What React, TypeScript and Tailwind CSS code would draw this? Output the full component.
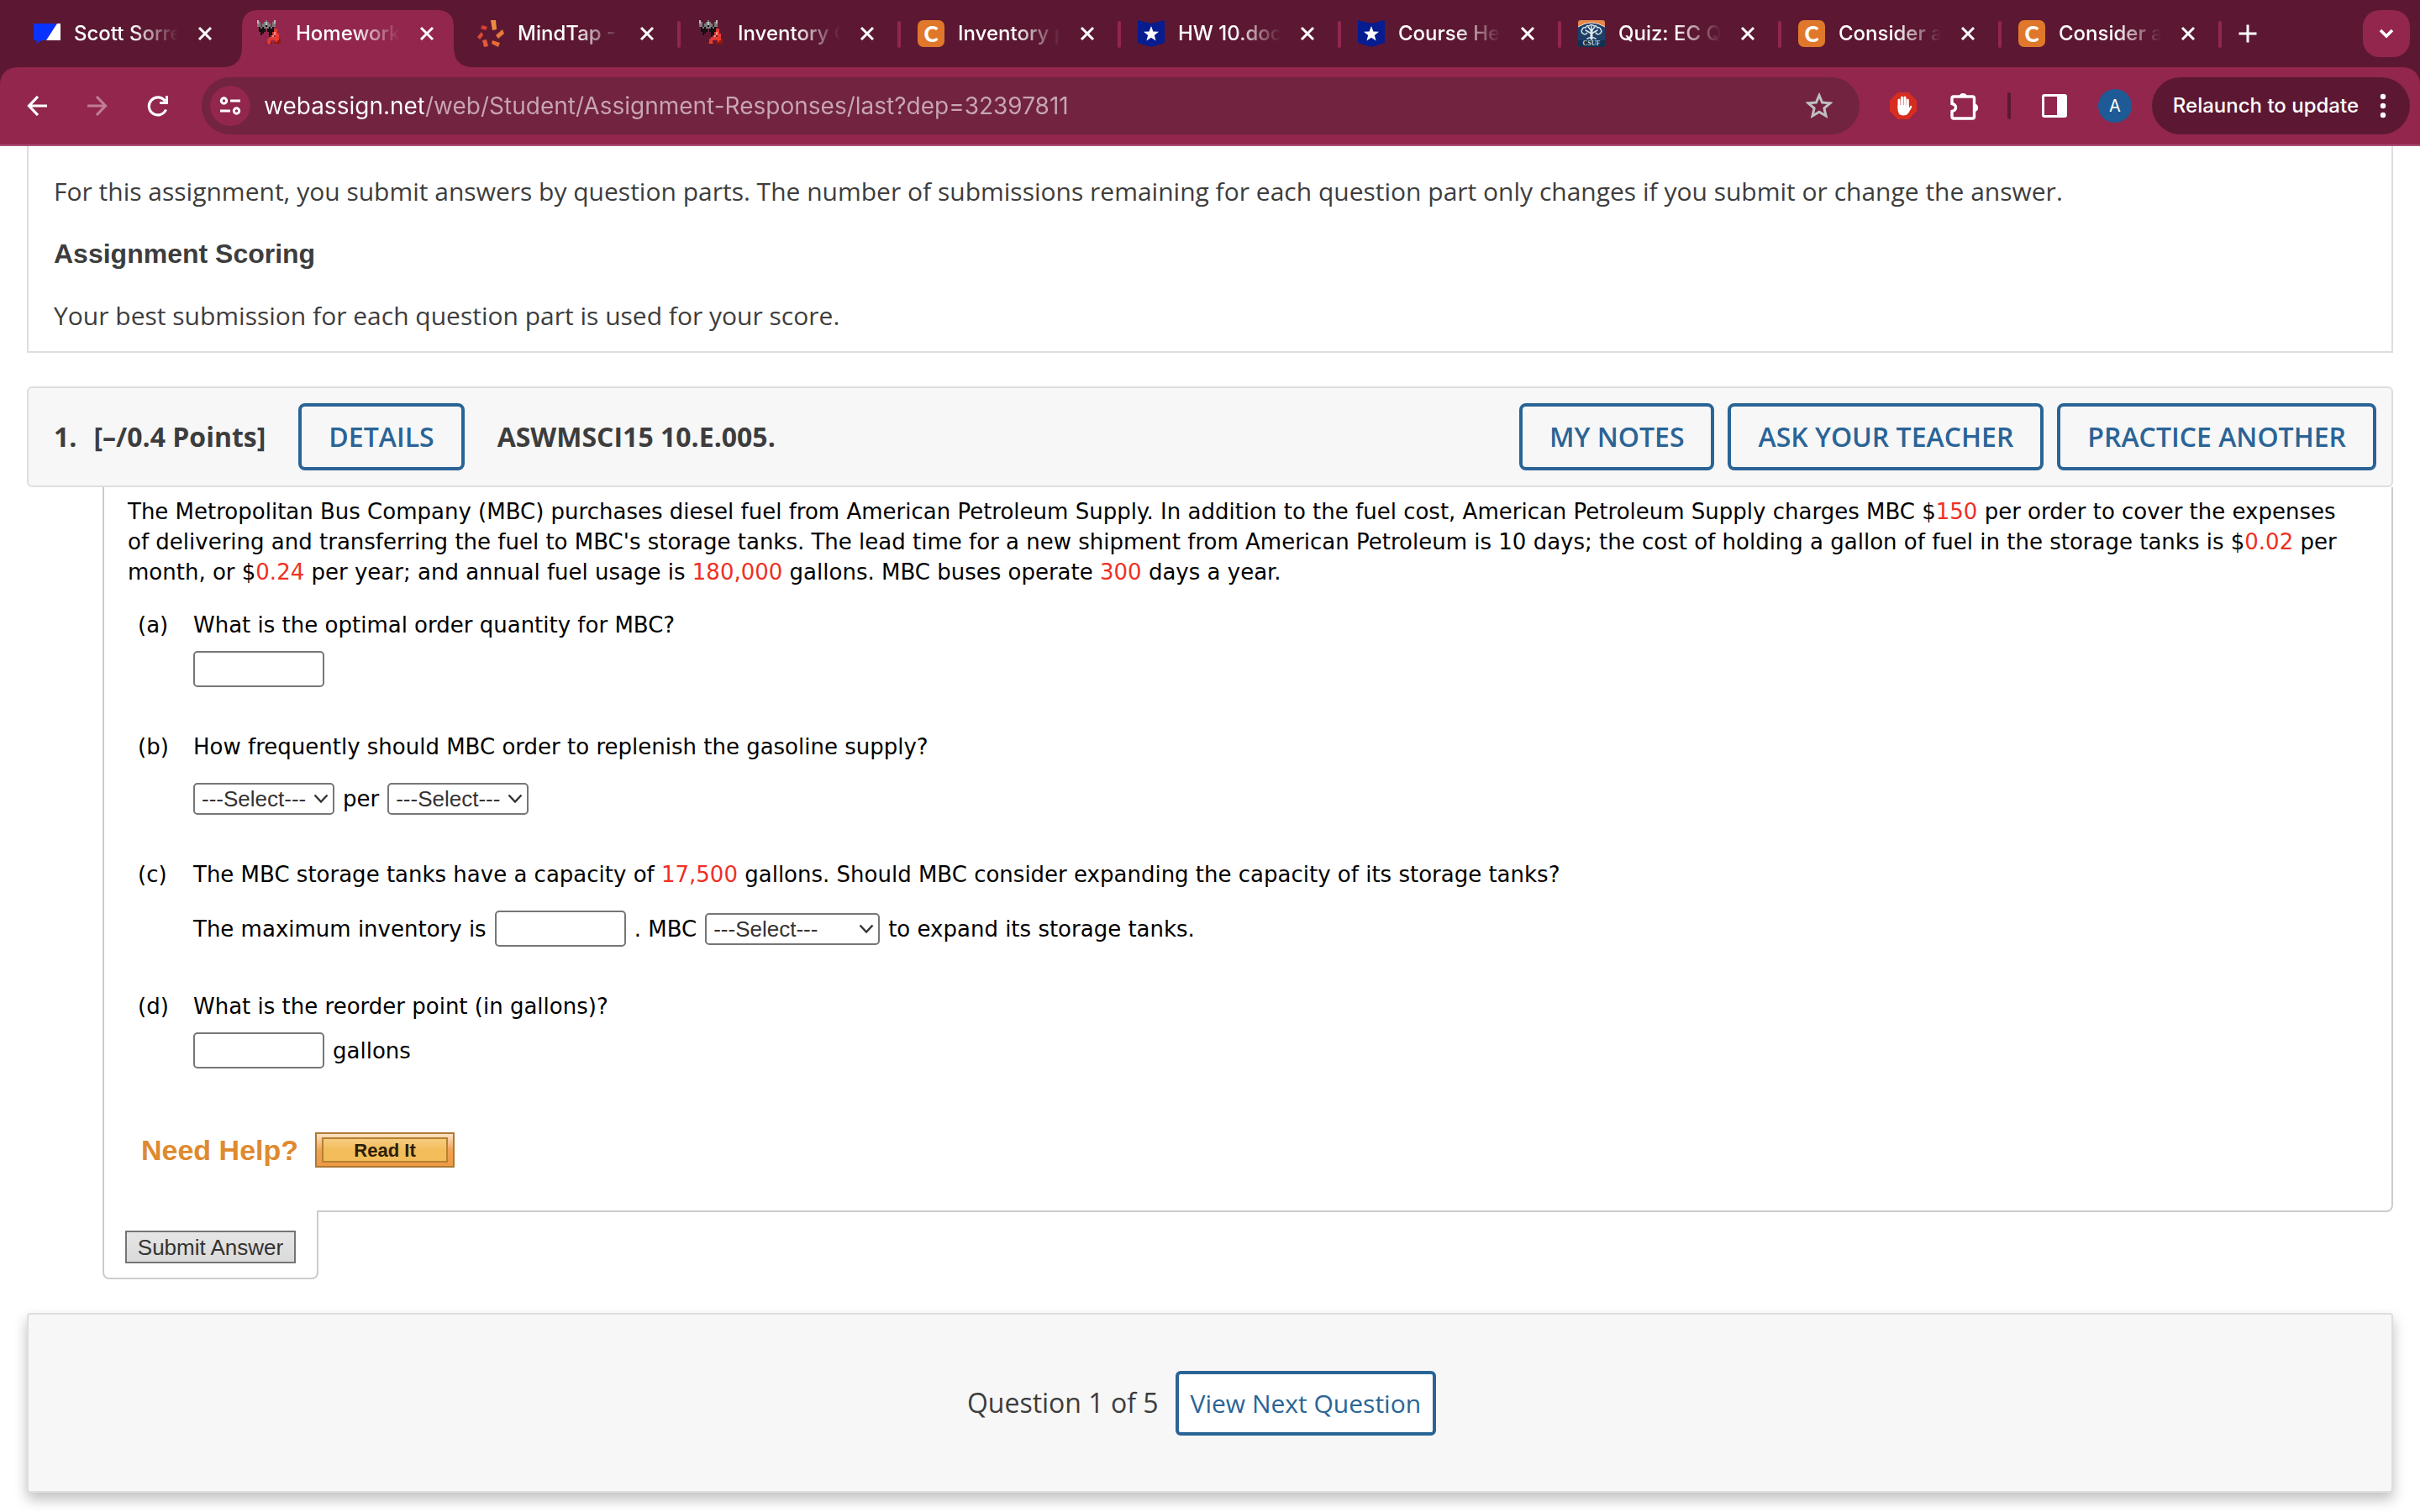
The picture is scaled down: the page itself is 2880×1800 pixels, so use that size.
import React from "react";

/* ---------- Favicons ---------- */

function ScottIcon() {
  return (
    <svg viewBox="0 0 32 32" className="h-8 w-8 shrink-0" aria-hidden="true">
      <path d="M0 4H28L15 24H10L3 28L4 24H0Z" fill="#0a32ff" />
      <path d="M28 4H32V24H15Z" fill="#fff" />
    </svg>
  );
}

const pixelColors: Record<string, string> = {
  l: "#bdbdbd",
  g: "#7c7c7c",
  k: "#151012",
  r: "#ee3a30",
  R: "#d23a38",
  p: "#f58a84",
  d: "#8f1a10",
};

const webAssignPixels = [
  ".l....g....l....",
  ".lg..glg..gl....",
  ".gg.gglgg.gg....",
  ".gg.ggkgg.gg....",
  "..kgkgggkgk.....",
  "..kkkk.kkkkRR...",
  "..kkkk.kkkkRr...",
  "...kk...kkRpr...",
  "...k....kkRprr..",
  "........kRp.rr..",
  "........RrrrrR..",
  ".......RrRRRrrd.",
  ".......Rr...rdd.",
  "......drrd.dddd.",
];

function WebAssignIcon() {
  return (
    <svg
      viewBox="0 0 32 32"
      className="h-8 w-8 shrink-0"
      shapeRendering="crispEdges"
      aria-hidden="true"
    >
      {webAssignPixels.flatMap((row, y) =>
        row
          .split("")
          .map((c, x) =>
            c === "." ? null : (
              <rect
                key={x + "-" + y}
                x={x * 2}
                y={y * 2}
                width="2"
                height="2"
                fill={pixelColors[c]}
              />
            ),
          ),
      )}
    </svg>
  );
}

function MindTapIcon() {
  return (
    <svg viewBox="0 0 32 32" className="h-8 w-8 shrink-0" aria-hidden="true">
      <path d="M16 0H22L23 11L18 12Z" fill="#ee8b41" />
      <path d="M30 11L32 16L25 22L22 18Z" fill="#e8793a" />
      <path d="M18 24L27 27L25 32L17 28Z" fill="#e66c36" />
      <path d="M6 24L11 23L13 31L8 32Z" fill="#e35b36" />
      <path d="M5 14L7 18L3 23L0 20Z" fill="#dd4b33" />
      <path d="M6 6L12 8L10 12L4 10Z" fill="#d83f33" />
    </svg>
  );
}

function CheggIcon() {
  return (
    <span
      aria-hidden="true"
      className="flex h-8 w-8 shrink-0 items-center justify-center rounded-[7px] bg-[#e0782c] font-['Lato'] text-[26px] leading-8 font-black text-white"
    >
      C
    </span>
  );
}

function CourseHeroIcon() {
  return (
    <svg viewBox="0 0 32 32" className="h-8 w-8 shrink-0" aria-hidden="true">
      <path d="M0 0L16 4L32 0V27L16 32L0 27Z" fill="#061c8f" />
      <path
        d="M16 7L18.400 13.600L25 13.800L19.800 18L21.600 24.600L16 20.800L10.400 24.600L12.200 18L7 13.800L13.600 13.600Z"
        fill="#fff"
      />
    </svg>
  );
}

function CsufIcon() {
  return (
    <svg viewBox="0 0 32 32" className="h-8 w-8 shrink-0" aria-hidden="true">
      <rect x="0" y="0" width="32" height="32" rx="3" fill="#1d3f66" />
      <path d="M0 8V3Q0 0 3 0H29Q32 0 32 3V8Q24 3 16 3Q8 3 0 8Z" fill="#e8874a" />
      <path d="M0 8Q8 3 16 3Q24 3 32 8" fill="none" stroke="#f3e3d4" strokeWidth="1" />
      <g fill="none" stroke="#dfe7ee" strokeLinecap="round">
        <path d="M16 22V12" strokeWidth="3" />
        <path d="M16 16L9 12M16 16L23 12M16 13L12 8M16 13L20 8M16 12V7" strokeWidth="1.500" />
        <path
          d="M5 11Q6 8 9 9Q10 6 13 7Q16 4 19 7Q22 6 23 9Q26 8 27 11Q29 14 26 16Q23 18 21 15M5 11Q3 14 6 16Q9 18 11 15"
          strokeWidth="1.500"
          strokeDasharray="3 1"
        />
        <path d="M11 22Q16 19 21 22" strokeWidth="1.500" />
      </g>
      <path d="M0 24H32V29Q32 32 29 32H3Q0 32 0 29Z" fill="#12304f" />
      <text
        x="16"
        y="30"
        textAnchor="middle"
        fontFamily="Liberation Serif, serif"
        fontWeight="700"
        fontSize="8"
        fill="#c5d3df"
      >
        CSUF
      </text>
    </svg>
  );
}

/* ---------- Tab strip ---------- */

type Tab = { title: string; icon: React.ReactNode; active?: boolean; divider?: boolean };

const tabs: Tab[] = [
  { title: "Scott Sorre", icon: <ScottIcon /> },
  { title: "Homework", icon: <WebAssignIcon />, active: true },
  { title: "MindTap - C", icon: <MindTapIcon />, divider: true },
  { title: "Inventory C", icon: <WebAssignIcon />, divider: true },
  { title: "Inventory p", icon: <CheggIcon />, divider: true },
  { title: "HW 10.doc", icon: <CourseHeroIcon />, divider: true },
  { title: "Course Her", icon: <CourseHeroIcon />, divider: true },
  { title: "Quiz: EC Q", icon: <CsufIcon />, divider: true },
  { title: "Consider a", icon: <CheggIcon />, divider: true },
  { title: "Consider a", icon: <CheggIcon />, divider: true },
];

function TabItem({ tab, wide }: { tab: Tab; wide: boolean }) {
  return (
    <div
      className={
        "relative flex h-20 items-center px-[22px] " + (wide ? "w-[264px]" : "w-[262px]")
      }
    >
      {tab.active && (
        <svg
          viewBox="0 0 300 68"
          className="absolute top-3 -left-[18px] h-[68px] w-[300px]"
          aria-hidden="true"
        >
          <path
            d="M0 68Q24 68 24 44V20Q24 0 44 0H256Q276 0 276 20V44Q276 68 300 68Z"
            fill="#92264d"
          />
        </svg>
      )}
      <a href="#" className="relative flex min-w-0 flex-1 items-center gap-4">
        {tab.icon}
        <span className="flex-1 overflow-hidden mask-r-from-55% mask-r-to-100% text-2xl font-medium whitespace-nowrap text-white">
          {tab.title}
        </span>
      </a>
      <button
        type="button"
        aria-label={"Close " + tab.title}
        className="relative ml-4 flex h-8 w-8 shrink-0 items-center justify-center"
      >
        <svg viewBox="0 0 18 18" className="h-[18px] w-[18px]" aria-hidden="true">
          <path d="M2 2L16 16M16 2L2 16" stroke="#fff" strokeWidth="3" fill="none" />
        </svg>
      </button>
      {tab.divider && (
        <span className="absolute top-[25px] -right-0.5 h-8 w-1 rounded-full bg-[#92264d]" />
      )}
    </div>
  );
}

function TabStrip() {
  return (
    <div className="flex h-20 items-center bg-[#5c1832] pr-3 pl-[18px]">
      {tabs.map((tab, i) => (
        <TabItem key={i} tab={tab} wide={i < 2} />
      ))}
      <button type="button" aria-label="New tab" className="ml-[22px] h-8">
        <svg viewBox="0 0 22 32" className="h-8 w-[22px]" aria-hidden="true">
          <path d="M11 5.500V26.500M0.500 16H21.500" stroke="#fff" strokeWidth="3" fill="none" />
        </svg>
      </button>
      <button
        type="button"
        aria-label="Search tabs"
        className="ml-auto flex h-14 w-14 items-center justify-center rounded-[20px] bg-[#92264d]"
      >
        <svg viewBox="0 0 18 12" className="h-3 w-[18px]" aria-hidden="true">
          <path d="M2 2L9 9L16 2" stroke="#fff" strokeWidth="3.500" fill="none" />
        </svg>
      </button>
    </div>
  );
}

/* ---------- Toolbar ---------- */

function Toolbar() {
  return (
    <div className="bg-[#5c1832]">
      <div className="flex h-[94px] items-center rounded-t-[20px] border-b-2 border-[#ab4f78] bg-[#92264d] pr-3 pl-[26px]">
        <div className="flex gap-9">
          <button type="button" aria-label="Back" className="flex h-9 w-9 items-center justify-center">
            <svg viewBox="0 0 24 24" className="h-6 w-6" aria-hidden="true">
              <path d="M13 1L2.500 12L13 23M3 12H24" stroke="#fff" strokeWidth="3.200" fill="none" />
            </svg>
          </button>
          <button type="button" aria-label="Forward" className="flex h-9 w-9 items-center justify-center">
            <svg viewBox="0 0 24 24" className="h-6 w-6" aria-hidden="true">
              <path d="M11 1L21.500 12L11 23M21 12H0" stroke="#c07c98" strokeWidth="3.200" fill="none" />
            </svg>
          </button>
          <button type="button" aria-label="Reload" className="flex h-9 w-9 items-center justify-center">
            <svg viewBox="0 0 26 26" className="h-[26px] w-[26px]" aria-hidden="true">
              <path d="M22.500 17.500A10.500 10.500 0 1 1 21.500 7.500" stroke="#fff" strokeWidth="3.200" fill="none" />
              <path d="M25 1V11H15V8H22V1Z" fill="#fff" />
            </svg>
          </button>
        </div>

        <div className="ml-[34px] flex h-[68px] flex-1 items-center rounded-full bg-[#712340] pr-8 pl-2.5">
          <button
            type="button"
            aria-label="View site information"
            className="flex h-12 w-12 shrink-0 items-center justify-center rounded-full bg-[#92264d]"
          >
            <svg viewBox="0 0 26 24" className="h-6 w-[26px]" aria-hidden="true">
              <g stroke="#fff" strokeWidth="3" fill="none">
                <circle cx="5.500" cy="6" r="3.200" />
                <path d="M13 6H25M1 18H13" />
                <circle cx="20.500" cy="18" r="3.200" />
              </g>
            </svg>
          </button>
          <input
            type="text"
            aria-label="Address"
            defaultValue="webassign.net/web/Student/Assignment-Responses/last?dep=32397811"
            className="ml-4 h-11 min-w-0 flex-1 bg-[linear-gradient(to_right,#ffffff_190px,#c8a5b4_190px)] bg-clip-text text-[28px] text-transparent outline-none"
          />
          <button type="button" aria-label="Bookmark this tab" className="flex h-8 w-8 shrink-0 items-center justify-center">
            <svg viewBox="0 0 32 32" className="h-8 w-8" aria-hidden="true">
              <path
                d="M16 3.500L19.600 12L29 12.800L21.900 18.900L24 28L16 23.200L8 28L10.100 18.900L3 12.800L12.400 12Z"
                stroke="#c0bfc0"
                strokeWidth="3"
                fill="none"
              />
            </svg>
          </button>
        </div>

        <button type="button" aria-label="Ad blocker" className="ml-9 h-8 w-8">
          <svg viewBox="0 0 32 32" className="h-8 w-8" aria-hidden="true">
            <path d="M9.500 0H22.500L32 9.500V22.500L22.500 32H9.500L0 22.500V9.500Z" fill="#d62d20" />
            <g stroke="#fff" strokeWidth="3" strokeLinecap="round" fill="none">
              <path d="M11 18V9M14.500 17V6M18 17V6M21.300 18V9" />
            </g>
            <path d="M9.500 15H22.800V19L24.500 16Q27 15 26 18L22 25Q20 27.500 16 27.500Q9.500 27.500 9.500 20Z" fill="#fff" />
          </svg>
        </button>
        <button type="button" aria-label="Extensions" className="ml-[38px] h-9 w-9">
          <svg viewBox="0 0 36 36" className="h-9 w-9" aria-hidden="true">
            <path
              d="M6 7H28.500Q30.500 7 30.500 9V31Q30.500 33 28.500 33H6Q4 33 4 31V24.500Q8.500 23.500 8.500 20Q8.500 16.500 4 15.500V9Q4 7 6 7Z"
              stroke="#fff"
              strokeWidth="3.400"
              fill="none"
            />
            <path d="M12.500 7A4.800 4.800 0 0 1 22 7ZM31 15.500A4.800 4.800 0 0 1 31 25Z" fill="#fff" />
          </svg>
        </button>
        <span className="ml-[34px] h-8 w-1 rounded-full bg-[#5c1832]" />
        <button type="button" aria-label="Side panel" className="ml-9 flex h-8 w-8 items-center justify-center">
          <svg viewBox="0 0 30 30" className="h-[30px] w-[30px]" aria-hidden="true">
            <rect x="1.500" y="2.500" width="27" height="25" rx="1.500" fill="none" stroke="#fff" strokeWidth="3" />
            <path d="M18 2H29V28H18Z" fill="#fff" />
          </svg>
        </button>
        <button
          type="button"
          aria-label="Profile"
          className="ml-9 flex h-10 w-10 items-center justify-center rounded-full bg-[#1e5a96] text-xl text-white"
        >
          A
        </button>
        <button
          type="button"
          className="ml-6 flex h-[68px] items-center gap-[25px] rounded-full bg-[#5c1832] pr-7 pl-[25px] text-2xl font-medium text-white"
        >
          Relaunch to update
          <svg viewBox="0 0 8 30" className="h-[30px] w-2" aria-hidden="true">
            <circle cx="4" cy="4" r="3.200" fill="#fff" />
            <circle cx="4" cy="15" r="3.200" fill="#fff" />
            <circle cx="4" cy="26" r="3.200" fill="#fff" />
          </svg>
        </button>
      </div>
    </div>
  );
}

/* ---------- Question form ---------- */

function Red({ children }: { children: React.ReactNode }) {
  return <span className="text-[#ee3024]">{children}</span>;
}

function TextField({ label }: { label: string }) {
  return (
    <input
      type="text"
      aria-label={label}
      className="h-[43px] w-39 rounded-[5px] border-2 border-[#767676] bg-white px-2 font-['Liberation_Sans',sans-serif] text-[26px]"
    />
  );
}

function SelectField({ label, wide }: { label: string; wide?: boolean }) {
  return (
    <span className={"relative inline-flex h-[38px] " + (wide ? "w-52" : "w-42")}>
      <select
        aria-label={label}
        className="h-full w-full appearance-none rounded-[5px] border-2 border-[#767676] bg-white pl-2 font-['Liberation_Sans',sans-serif] text-[26px] leading-8 text-[#333333]"
      >
        <option>---Select---</option>
      </select>
      <svg
        viewBox="0 0 18 12"
        className="pointer-events-none absolute top-[13px] right-[7px] h-3 w-[18px]"
        aria-hidden="true"
      >
        <path d="M1.500 1.500L9 9.500L16.500 1.500" stroke="#333" strokeWidth="2.400" fill="none" />
      </svg>
    </span>
  );
}

function Part({
  letter,
  question,
  gap,
  children,
}: {
  letter: string;
  question: React.ReactNode;
  gap: string;
  children: React.ReactNode;
}) {
  return (
    <li className="flex">
      <span className="w-[66px] shrink-0">({letter})</span>
      <div className="flex-1">
        <p>{question}</p>
        <div className={"flex items-center " + gap}>{children}</div>
      </div>
    </li>
  );
}

function OutlineButton({ children }: { children: React.ReactNode }) {
  return (
    <button
      type="button"
      className="h-20 rounded-lg border-4 border-[#2a6496] px-8 text-[32px] font-semibold text-[#2a6496]"
    >
      {children}
    </button>
  );
}

export default function App() {
  return (
    <div className="min-h-screen bg-white">
      <header className="font-['Inter',sans-serif]">
        <TabStrip />
        <Toolbar />
      </header>

      <main className="px-8 pb-6 font-['Open_Sans',sans-serif] text-[#3d3d3d]">
        <section className="border-x-2 border-b-2 border-[#dedede] px-[30px] pt-8 pb-5 text-[30px] leading-11">
          <p>
            For this assignment, you submit answers by question parts. The number of submissions
            remaining for each question part only changes if you submit or change the answer.
          </p>
          <h2 className="my-[34px] font-['Liberation_Sans',sans-serif] text-[32px] leading-9 font-bold">
            Assignment Scoring
          </h2>
          <p>Your best submission for each question part is used for your score.</p>
        </section>

        <section className="mt-10">
          <div className="flex h-30 items-center rounded-md border-2 border-[#dedede] bg-[#f7f7f7] pr-[18px] pl-[30px] text-[32px] font-bold">
            <span>1.</span>
            <span className="ml-5">[–/0.4 Points]</span>
            <div className="mx-[39px] flex">
              <OutlineButton>DETAILS</OutlineButton>
            </div>
            <span>ASWMSCI15 10.E.005.</span>
            <div className="ml-auto flex gap-4">
              <OutlineButton>MY NOTES</OutlineButton>
              <OutlineButton>ASK YOUR TEACHER</OutlineButton>
              <OutlineButton>PRACTICE ANOTHER</OutlineButton>
            </div>
          </div>

          <div className="ml-[90px] rounded-br-lg border-x-2 border-b-2 border-[#cccccc] pt-[11px] pr-11 pb-[51px] pl-7 font-['DejaVu_Sans',sans-serif] text-[26px] leading-9 text-black">
            <p>
              The Metropolitan Bus Company (MBC) purchases diesel fuel from American Petroleum
              Supply. In addition to the fuel cost, American Petroleum Supply charges MBC $
              <Red>150</Red> per order to cover the expenses of delivering and transferring the fuel
              to MBC's storage tanks. The lead time for a new shipment from American Petroleum is 10
              days; the cost of holding a gallon of fuel in the storage tanks is $<Red>0.02</Red>{" "}
              per month, or $<Red>0.24</Red> per year; and annual fuel usage is <Red>180,000</Red>{" "}
              gallons. MBC buses operate <Red>300</Red> days a year.
            </p>

            <ul className="mt-[27px] space-y-[53px] pl-3">
              <Part letter="a" question="What is the optimal order quantity for MBC?" gap="mt-[13px]">
                <TextField label="Optimal order quantity" />
              </Part>
              <Part
                letter="b"
                question="How frequently should MBC order to replenish the gasoline supply?"
                gap="mt-[25px]"
              >
                <SelectField label="Order frequency" />
                <span className="mx-[10px]">per</span>
                <SelectField label="Order period" />
              </Part>
              <Part
                letter="c"
                question={
                  <>
                    The MBC storage tanks have a capacity of <Red>17,500</Red> gallons. Should MBC
                    consider expanding the capacity of its storage tanks?
                  </>
                }
                gap="mt-[25px]"
              >
                <span className="mr-[10px]">The maximum inventory is</span>
                <TextField label="Maximum inventory" />
                <span className="mx-[10px]">. MBC</span>
                <SelectField label="Need to expand" wide />
                <span className="ml-[10px]">to expand its storage tanks.</span>
              </Part>
              <Part letter="d" question="What is the reorder point (in gallons)?" gap="mt-[13px]">
                <TextField label="Reorder point" />
                <span className="ml-[10px]">gallons</span>
              </Part>
            </ul>

            <div className="mt-[76px] flex h-[42px] items-center pl-4 font-['Liberation_Sans',sans-serif] font-bold">
              <span className="text-[34px] text-[#df8a2e]">Need Help?</span>
              <button
                type="button"
                className="ml-5 flex h-[42px] w-[166px] items-center rounded-none border-2 border-[#ad7a34] bg-linear-to-b from-[#fbe3c4] via-[#efa354] to-[#ee9a45] p-1.5 text-[22px] text-[#2b2008]"
              >
                <span className="flex h-[30px] w-full items-center justify-center border-2 border-[#b5812f] bg-linear-to-b from-[#f6cc80] via-[#f3bd5b] to-[#f3bd5b] pt-0.5">
                  Read It
                </span>
              </button>
            </div>
          </div>

          <div className="relative -mt-0.5 ml-[90px] w-[257px] rounded-b-lg border-x-2 border-b-2 border-[#cccccc] bg-white px-[25px] pt-6 pb-[17px]">
            <button
              type="submit"
              className="block h-[39px] w-full border-2 border-[#757575] bg-linear-to-b from-[#e6e6e6] to-[#dadada] font-['Liberation_Sans',sans-serif] text-[26px] leading-8 text-[#333333]"
            >
              Submit Answer
            </button>
          </div>
        </section>

        <nav className="mt-10 flex h-[214px] items-center justify-center rounded-sm border-2 border-[#dedede] bg-[#f7f7f7] pr-5 text-[32px] shadow-[0_8px_16px_rgba(0,0,0,0.25)]">
          <span>Question 1 of 5</span>
          <button
            type="button"
            className="ml-5 h-[77px] rounded-md border-4 border-[#2a6496] bg-white px-3.5 text-[30px] text-[#2a6496]"
          >
            View Next Question
          </button>
        </nav>
      </main>
    </div>
  );
}
